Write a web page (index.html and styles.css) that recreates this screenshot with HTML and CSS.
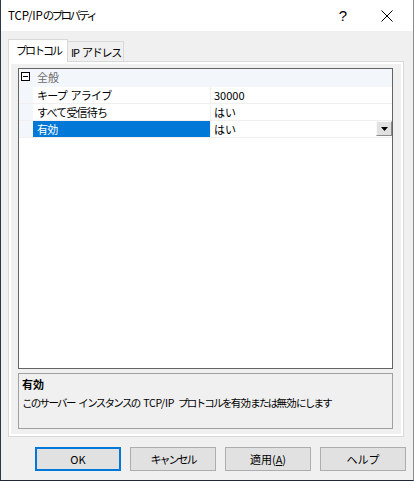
FILE: index.html
```html
<!DOCTYPE html>
<html lang="ja">

<head>
    <meta charset="UTF-8">
    <title>TCP/IPのプロパティ</title>
    <link rel="stylesheet" href="styles.css">
</head>

<body>
    <main class="ventana">
        <header class="titulo">
            <span class="titulo-texto">TCP/IP<span class="kana">のプロパティ</span></span>
            <span class="titulo-boton">?</span>
            <span class="titulo-boton">
                <svg width="12" height="12" viewBox="0 0 12 12">
                    <path d="M0.5 0.5 L11.5 11.5 M11.5 0.5 L0.5 11.5" stroke="#000" stroke-width="1" fill="none"/>
                </svg>
            </span>
        </header>

        <section class="contenido">
            <nav class="pestanas">
                <span class="pestana activa">プロトコル</span>
                <span class="pestana ip">IP アドレス</span>
            </nav>
            <div class="panel">
                <div class="pagina">
                    <div class="grilla">
                        <div class="fila categoria">
                            <span class="margen"><span class="menos"></span></span>
                            <span class="cat-nombre">全般</span>
                        </div>
                        <div class="fila">
                            <span class="margen"></span>
                            <span class="nombre">キープ アライブ</span>
                            <span class="valor">30000</span>
                        </div>
                        <div class="fila">
                            <span class="margen"></span>
                            <span class="nombre">すべて受信待ち</span>
                            <span class="valor">はい</span>
                        </div>
                        <div class="fila seleccionada">
                            <span class="margen"></span>
                            <span class="nombre">有効</span>
                            <span class="valor">はい
                                <span class="desplegar">
                                    <svg width="7" height="4" viewBox="0 0 7 4"><path d="M0 0 H7 L3.5 4 Z" fill="#000"/></svg>
                                </span>
                            </span>
                        </div>
                    </div>
                    <div class="descripcion">
                        <strong>有効</strong>
                        <p>このサーバー インスタンスの <span class="latin">TCP/IP</span> プロトコルを<span class="kanji">有効</span>または<span class="kanji">無効</span>にします</p>
                    </div>
                </div>
            </div>
        </section>

        <footer class="botones">
            <button class="boton principal">OK</button>
            <button class="boton estrecho">キャンセル</button>
            <button class="boton">適用(<u>A</u>)</button>
            <button class="boton">ヘルプ</button>
        </footer>
    </main>
</body>

</html>
```

FILE: styles.css
```css
body {
    margin: 0;
    font-family: "Noto Sans CJK JP", sans-serif;
    font-size: 11px;
    color: #000;
}

.ventana {
    width: 414px;
    height: 481px;
    box-sizing: border-box;
    border-left: 1px solid #2e3846;
    border-right: 1px solid #8c8c8c;
    border-bottom: 1px solid #1e2733;
    background: #f0f0f0;
    display: flex;
    flex-direction: column;
    white-space: nowrap;
}

.titulo {
    height: 31px;
    background: #fff;
    display: flex;
    align-items: center;
    padding: 0 4px 0 7px;
}

.titulo-texto {
    flex: 1;
    font-size: 11.5px;
    line-height: 16px;
    padding-bottom: 1px;
    letter-spacing: -0.1px;
}

.titulo-texto .kana {
    letter-spacing: -2.6px;
}

.titulo-boton {
    width: 44px;
    height: 31px;
    display: flex;
    align-items: center;
    justify-content: center;
    font-family: "Liberation Sans", sans-serif;
    font-size: 15px;
}

.contenido {
    padding: 8px 9px 0 7px;
}

.pestanas {
    display: flex;
    align-items: flex-end;
    height: 22px;
    position: relative;
    z-index: 1;
}

.pestana {
    box-sizing: border-box;
    height: 20px;
    width: 56px;
    border: 1px solid #d9d9d9;
    border-left: none;
    border-bottom: none;
    background: #f0f0f0;
    display: flex;
    align-items: center;
    justify-content: center;
    line-height: 14px;
    padding-left: 1px;
}

.pestana.activa {
    width: 60px;
    height: 23px;
    margin-bottom: -1px;
    border-left: 1px solid #d9d9d9;
    background: #fff;
    padding-bottom: 2px;
    letter-spacing: -2px;
}

.pestana.ip {
    letter-spacing: -1.2px;
    word-spacing: 2px;
}

.panel {
    box-sizing: border-box;
    height: 376px;
    border: 1px solid #d9d9d9;
    background: #fff;
    padding: 2px;
}

.pagina {
    height: 100%;
    box-sizing: border-box;
    background: #f0f0f0;
    padding: 4px 8px 5px 7px;
    display: flex;
    flex-direction: column;
    gap: 4px;
}

.grilla {
    height: 301px;
    box-sizing: border-box;
    border: 1px solid #646464;
    background: #fff;
}

.fila {
    display: flex;
    height: 17px;
    box-sizing: border-box;
    border-bottom: 1px solid #f0f0f0;
    line-height: 16px;
}

.fila.categoria {
    height: 18px;
    background: #f3f6fb;
    border-bottom: 1px solid #f3f6fb;
    line-height: 17px;
}

.margen {
    width: 14px;
    flex: none;
    background: #f3f6fb;
    position: relative;
}

.menos {
    position: absolute;
    left: 2px;
    top: 3px;
    width: 9px;
    height: 9px;
    box-sizing: border-box;
    border: 1px solid #000;
    background: #fff;
}

.menos::after {
    content: "";
    position: absolute;
    left: 1px;
    right: 1px;
    top: 3px;
    height: 1px;
    background: #000;
}

.cat-nombre {
    padding-left: 4px;
    color: #6d6d6d;
}

.nombre {
    width: 178px;
    flex: none;
    box-sizing: border-box;
    padding-left: 4px;
    border-right: 1px solid #f0f0f0;
    letter-spacing: -0.8px;
    word-spacing: 2px;
}

.valor {
    flex: 1;
    padding-left: 3px;
    position: relative;
}

.seleccionada .nombre {
    background: #0078d7;
    color: #fff;
}

.desplegar {
    position: absolute;
    right: 0;
    top: 0;
    width: 16px;
    height: 15px;
    box-sizing: border-box;
    background: #e1e1e1;
    border: 1px solid #f8f8f8;
    border-right-color: #8a8a8a;
    border-bottom-color: #8a8a8a;
    display: flex;
    align-items: center;
    justify-content: center;
}

.descripcion {
    height: 56px;
    box-sizing: border-box;
    border: 1px solid #a0a0a0;
    padding: 2px 3px;
    line-height: 17px;
}

.descripcion strong {
    display: block;
}

.descripcion p {
    margin: 1px 0 0;
    font-size: 10.5px;
    letter-spacing: -1.7px;
    word-spacing: 3px;
}

.descripcion .latin {
    letter-spacing: -0.2px;
}

.descripcion .kanji {
    letter-spacing: -0.8px;
}

.botones {
    display: flex;
    justify-content: flex-end;
    gap: 9px;
    padding: 10px 7px 0 0;
}

.boton {
    width: 86px;
    height: 24px;
    box-sizing: border-box;
    background: #e1e1e1;
    border: 1px solid #adadad;
    font: inherit;
    color: #000;
    padding: 0 0 1px;
    line-height: 16px;
}

.boton.estrecho {
    letter-spacing: -2px;
}

.boton.principal {
    border: 2px solid #0078d7;
}
```
